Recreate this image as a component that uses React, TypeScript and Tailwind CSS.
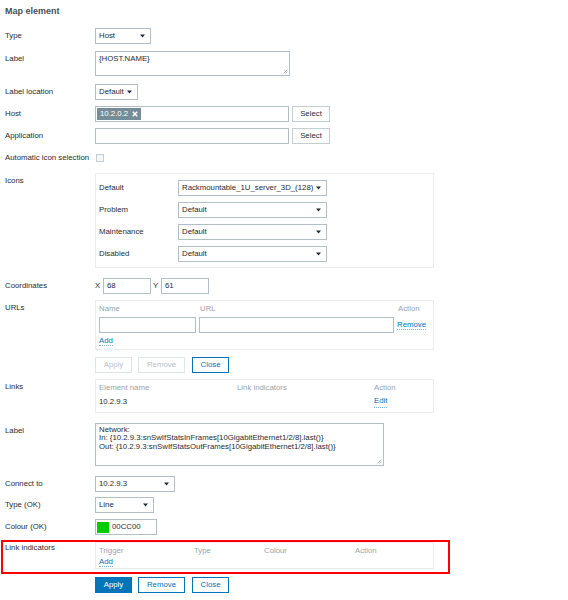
import type { ReactNode } from "react";

function Caret() {
  return (
    <svg width="5" height="4" viewBox="0 0 5 4" className="shrink-0">
      <path d="M0 0.5h5L2.5 3.5z" fill="#1f2c33" />
    </svg>
  );
}

function Select({ value, className }: { value: string; className: string }) {
  return (
    <div className={"flex h-[16px] items-center justify-between border border-[#b4bfc5] bg-white pl-[3px] pr-[5px] " + className}>
      <span className="leading-none whitespace-nowrap">{value}</span>
      <Caret />
    </div>
  );
}

function Input({ className, children }: { className: string; children?: ReactNode }) {
  return <div className={"flex h-[16px] items-center border border-[#b4bfc5] bg-white " + className}>{children}</div>;
}

function TextArea({ className, children }: { className: string; children: ReactNode }) {
  return (
    <div className={"relative border border-[#b4bfc5] bg-white pl-[3px] " + className}>
      {children}
      <svg width="6" height="6" viewBox="0 0 6 6" className="absolute right-[1px] bottom-[1px]">
        <path d="M5.5 1.5L1.5 5.5M5.5 3.5L3.5 5.5" stroke="#9aa3a8" strokeWidth="0.8" />
      </svg>
    </div>
  );
}

function Link({ children }: { children: ReactNode }) {
  return <span className="border-b border-dotted border-[#7fb2d6] text-[#0275b8] leading-[9px]">{children}</span>;
}

function Button({ children, kind, className }: { children: ReactNode; kind: "main" | "alt" | "off"; className: string }) {
  const look =
    kind === "main"
      ? "bg-[#0275b8] border-[#0275b8] text-white"
      : kind === "alt"
        ? "bg-white border-[#0275b8] text-[#0275b8]"
        : "bg-white border-[#dfe4e7] text-[#b8c2c8]";
  return (
    <div className={"flex h-[16px] items-center justify-center border leading-none " + look + " " + className}>{children}</div>
  );
}

function Row({ label, children, className = "", labelClass = "leading-[16px]" }: { label: string; children: ReactNode; className?: string; labelClass?: string }) {
  return (
    <div className={"flex " + className}>
      <div className={"w-[90px] shrink-0 " + labelClass}>{label}</div>
      <div>{children}</div>
    </div>
  );
}

const icons = [
  ["Default", "Rackmountable_1U_server_3D_(128)"],
  ["Problem", "Default"],
  ["Maintenance", "Default"],
  ["Disabled", "Default"],
];

export default function App() {
  return (
    <div className="min-h-[600px] w-[568px] bg-white pt-[5px] pl-[5px] font-['Liberation_Sans',Arial,sans-serif] text-[7.8px] text-[#1f2c33]">
      <h4 className="text-[9px] leading-[12px] font-bold text-[#44525c]">Map element</h4>

      <div className="mt-[11px] flex flex-col">
        <Row label="Type" className="mb-[7px]">
          <Select value="Host" className="w-[56px]" />
        </Row>

        <Row label="Label" className="mb-[8px]">
          <TextArea className="h-[25px] w-[195px] pt-[2px] leading-[9px]">{"{HOST.NAME}"}</TextArea>
        </Row>

        <Row label="Label location" className="mb-[6px]">
          <Select value="Default" className="w-[43px]" />
        </Row>

        <Row label="Host" className="mb-[6px]">
          <div className="flex">
            <Input className="w-[194px] pl-[1px]">
              <span className="flex h-[12px] items-center gap-[4px] bg-[#768d99] px-[3px] text-white leading-none">
                10.2.0.2
                <svg width="6" height="6" viewBox="0 0 6 6">
                  <path d="M0.8 0.8L5.2 5.2M5.2 0.8L0.8 5.2" stroke="#fff" strokeWidth="1.5" />
                </svg>
              </span>
            </Input>
            <Button kind="off" className="ml-[3px] w-[38px] !border-[#c5ced3] !text-[#1f2c33]">Select</Button>
          </div>
        </Row>

        <Row label="Application" className="mb-[6px]">
          <div className="flex">
            <Input className="w-[194px]" />
            <Button kind="off" className="ml-[3px] w-[38px] !border-[#c5ced3] !text-[#1f2c33]">Select</Button>
          </div>
        </Row>

        <Row label="Automatic icon selection" className="mb-[7px]">
          <div className="flex h-[16px] items-center">
            <div className="ml-[1px] h-[8px] w-[8px] border border-[#c5ced3] bg-[#f4f6f7]" />
          </div>
        </Row>

        <Row label="Icons" className="mb-[10px]">
          <div className="flex w-[339px] flex-col gap-[6px] border border-[#ebeef0] pt-[6px] pb-[5px] pl-[3px]">
            {icons.map(([name, value]) => (
              <div key={name} className="flex">
                <div className="w-[79px] leading-[16px]">{name}</div>
                <Select value={value} className="w-[149px]" />
              </div>
            ))}
          </div>
        </Row>

        <Row label="Coordinates" className="mb-[6px]">
          <div className="flex items-center">
            <span className="w-[8px]">X</span>
            <Input className="w-[48px] pl-[3px]">68</Input>
            <span className="ml-[2px] w-[8px]">Y</span>
            <Input className="w-[48px] pl-[3px]">61</Input>
          </div>
        </Row>

        <Row label="URLs" className="mb-[6px]">
          <div className="w-[339px] border border-[#ebeef0] pt-[2px] pb-[2px] pl-[3px]">
            <div className="flex leading-[12px] text-[#99a4ab]">
              <span className="w-[101px]">Name</span>
              <span className="w-[198px]">URL</span>
              <span>Action</span>
            </div>
            <div className="mt-[2px] flex items-center">
              <Input className="w-[97px]" />
              <Input className="ml-[3px] w-[195px]" />
              <span className="ml-[3px]">
                <Link>Remove</Link>
              </span>
            </div>
            <div className="mt-[2px] leading-[12px]">
              <Link>Add</Link>
            </div>
          </div>
          <div className="mt-[7px] flex">
            <Button kind="off" className="w-[37px]">Apply</Button>
            <Button kind="off" className="ml-[6px] w-[47px]">Remove</Button>
            <Button kind="alt" className="ml-[7px] w-[37px]">Close</Button>
          </div>
        </Row>

        <Row label="Links" className="mb-[10px]">
          <div className="w-[339px] border border-[#ebeef0] pt-[2px] pb-[4px] pl-[3px]">
            <div className="flex leading-[12px] text-[#99a4ab]">
              <span className="w-[138px]">Element name</span>
              <span className="w-[137px]">Link indicators</span>
              <span>Action</span>
            </div>
            <div className="mt-[2px] flex leading-[12px]">
              <span className="w-[275px]">10.2.9.3</span>
              <Link>Edit</Link>
            </div>
          </div>
        </Row>

        <Row label="Label" className="mb-[10px]">
          <TextArea className="h-[43px] w-[289px] pt-[2px] leading-[8.4px]">
            <div>Network:</div>
            <div>{"In: {10.2.9.3:snSwIfStatsInFrames[10GigabitEthernet1/2/8].last()}"}</div>
            <div>{"Out: {10.2.9.3:snSwIfStatsOutFrames[10GigabitEthernet1/2/8].last()}"}</div>
          </TextArea>
        </Row>

        <Row label="Connect to" className="mb-[5px]">
          <Select value="10.2.9.3" className="w-[80px]" />
        </Row>

        <Row label="Type (OK)" className="mb-[6px]">
          <Select value="Line" className="w-[59px]" />
        </Row>

        <Row label="Colour (OK)" className="mb-[5px]">
          <Input className="w-[62px]">
            <span className="ml-[1px] h-[11px] w-[12px] bg-[#00cc00]" />
            <span className="ml-[3px]">00CC00</span>
          </Input>
        </Row>

        <div className="-ml-[4px] w-[449px] border-2 border-[#ff0000] pb-[3px] pl-[2px]">
          <Row label="Link indicators" labelClass="leading-[12px]">
            <div className="w-[339px] border border-[#ebeef0] pt-[2px] pb-[1px] pl-[3px]">
              <div className="flex leading-[12px] text-[#99a4ab]">
                <span className="w-[95px]">Trigger</span>
                <span className="w-[70px]">Type</span>
                <span className="w-[91px]">Colour</span>
                <span>Action</span>
              </div>
              <div className="leading-[10px]">
                <Link>Add</Link>
              </div>
            </div>
          </Row>
        </div>

        <div className="mt-[3px] flex pl-[90px]">
          <Button kind="main" className="w-[37px]">Apply</Button>
          <Button kind="alt" className="ml-[6px] w-[47px]">Remove</Button>
          <Button kind="alt" className="ml-[7px] w-[37px]">Close</Button>
        </div>
      </div>
    </div>
  );
}
